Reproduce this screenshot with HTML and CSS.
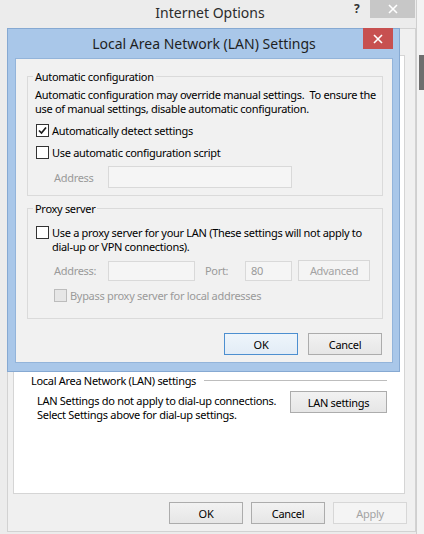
FILE: index.html
```html
<!DOCTYPE html>
<html lang="en">
<head>
    <meta charset="UTF-8">
    <meta name="viewport" content="width=device-width, initial-scale=1.0">
    <title>Internet Options</title>
    <link rel="stylesheet" href="styles.css">
</head>
<body>

    <div class="page">
        <div class="window">
            <div class="titlebar">
                <span class="title">Internet Options</span>
                <span class="help">?</span>
                <span class="close close-gray">
                    <svg width="10" height="10" viewBox="0 0 10 10"><path d="M1 1L9 9M9 1L1 9" stroke="#fff" stroke-width="1.6"/></svg>
                </span>
            </div>

            <div class="client">
                <div class="tabpanel">
                    <div class="etched">
                        <span>Local Area Network (LAN) settings</span>
                        <span class="rule"></span>
                    </div>
                    <div class="lan-row">
                        <p class="note">LAN Settings do not apply to dial-up connections.<br>Select Settings above for dial-up settings.</p>
                        <button class="btn lan-btn">LAN settings</button>
                    </div>
                </div>

                <div class="actions">
                    <button class="btn">OK</button>
                    <button class="btn">Cancel</button>
                    <button class="btn" disabled>Apply</button>
                </div>
            </div>
        </div>
        <div class="side-strip">
            <div class="side-dark"></div>
        </div>
    </div>

    <!-- LAN settings dialog, opened on top of the options window -->
    <div class="dialog">
        <div class="dlg-title">
            <span>Local Area Network (LAN) Settings</span>
            <span class="close close-red">
                <svg width="10" height="10" viewBox="0 0 10 10"><path d="M1 1L9 9M9 1L1 9" stroke="#fff" stroke-width="1.6"/></svg>
            </span>
        </div>

        <div class="dlg-client">
            <fieldset class="group auto-group">
                <legend>Automatic configuration</legend>
                <p class="text">Automatic configuration may override manual settings.&nbsp; To ensure the<br>use of manual settings, disable automatic configuration.</p>

                <label class="check-row first">
                    <span class="checkbox checked">
                        <svg width="11" height="11" viewBox="0 0 11 11"><path d="M2 5.5L4.5 8L9 2.5" fill="none" stroke="#1a1a1a" stroke-width="1.7"/></svg>
                    </span>
                    Automatically detect settings
                </label>
                <label class="check-row">
                    <span class="checkbox"></span>
                    Use automatic configuration script
                </label>

                <div class="field-row script-row">
                    <span class="field-label">Address</span>
                    <span class="input wide"></span>
                </div>
            </fieldset>

            <fieldset class="group proxy-group">
                <legend>Proxy server</legend>
                <label class="check-row top">
                    <span class="checkbox"></span>
                    <span class="text">Use a proxy server for your LAN (These settings will not apply to<br>dial-up or VPN connections).</span>
                </label>

                <div class="field-row proxy-row">
                    <span class="field-label">Address:</span>
                    <span class="input addr"></span>
                    <span class="field-label port-label">Port:</span>
                    <span class="input port">80</span>
                    <button class="btn adv-btn" disabled>Advanced</button>
                </div>

                <label class="check-row bypass">
                    <span class="checkbox disabled"></span>
                    <span class="muted">Bypass proxy server for local addresses</span>
                </label>
            </fieldset>

            <div class="dlg-actions">
                <button class="btn default">OK</button>
                <button class="btn">Cancel</button>
            </div>
        </div>
    </div>

</body>
</html>
```

FILE: styles.css
```css
* {
    box-sizing: border-box;
}
body {
    margin: 0;
    width: 424px;
    height: 534px;
    overflow: hidden;
    background-color: #efefef;
    font-family: "Noto Sans", "Open Sans", sans-serif;
    font-size: 11px;
    letter-spacing: -0.3px;
    color: #000;
    position: relative;
}
p {
    margin: 0;
}

/* ---- options window behind ---- */
.page {
    display: flex;
    height: 534px;
}
.window {
    width: 416px;
    display: flex;
    flex-direction: column;
    background-color: #ececec;
}
.titlebar {
    height: 28px;
    position: relative;
    display: flex;
    justify-content: center;
}
.title {
    font-size: 14px;
    letter-spacing: 0;
    color: #2b2b2b;
    line-height: 26px;
    margin-left: 4px;
}
.help {
    position: absolute;
    left: 354px;
    top: 0;
    font-weight: bold;
    font-size: 12px;
    color: #333;
}
.close {
    position: absolute;
    display: flex;
    align-items: center;
    justify-content: center;
}
.close-gray {
    right: 1px;
    top: 0;
    width: 45px;
    height: 18px;
    background-color: #c7c7c7;
}
.client {
    flex: 1;
    display: flex;
    flex-direction: column;
    margin: 0 0 2px 7px;
    padding: 26px 8px 7px 5px;
    border: 1px solid #d2d2d2;
    background-color: #f0f0f0;
}
.tabpanel {
    flex: 1;
    margin-right: 2px;
    padding: 317px 17px 0 17px;
    background-color: #fff;
    border: 1px solid #d5d5d5;
}
.etched {
    display: flex;
    align-items: center;
    gap: 8px;
    line-height: 15px;
    white-space: nowrap;
}
.rule {
    flex: 1;
    height: 1px;
    background-color: #bdbdbd;
}
.lan-row {
    display: flex;
    justify-content: space-between;
    align-items: flex-start;
    margin-top: 3px;
    padding-left: 6px;
}
.note {
    line-height: 14px;
    margin-top: 3px;
    white-space: nowrap;
}

.btn {
    font-family: inherit;
    font-size: 11px;
    letter-spacing: -0.3px;
    color: #000;
    height: 22px;
    width: 74px;
    padding: 0;
    border: 1px solid #acacac;
    background: linear-gradient(#f2f2f2, #e6e6e6);
}
.btn:disabled {
    color: #a3a3a3;
    border-color: #d7d7d7;
    background: #f4f4f4;
}
.btn.default {
    border-color: #4d8fd0;
    background: linear-gradient(#eef5fb, #e2ecf6);
}
.lan-btn {
    width: 97px;
}
.actions {
    display: flex;
    justify-content: flex-end;
    gap: 8px;
    margin-top: 8px;
}

.side-strip {
    flex: 1;
    border-left: 1px solid #cfcfcf;
    background-color: #f3f3f3;
    padding-top: 55px;
}
.side-dark {
    height: 35px;
    margin-left: 2px;
    background-color: #6e6e6e;
}

/* ---- LAN settings dialog ---- */
.dialog {
    position: absolute;
    left: 7px;
    top: 28px;
    width: 393px;
    height: 344px;
    padding: 0 6px 8px 7px;
    display: flex;
    flex-direction: column;
    background-color: #a9c7e9;
    border: 1px solid #86a9d2;
}
.dlg-title {
    height: 29px;
    flex-shrink: 0;
    display: flex;
    justify-content: center;
    align-items: center;
    font-size: 14px;
    letter-spacing: 0;
    color: #1f1f1f;
}
.close-red {
    right: 6px;
    top: -1px;
    width: 30px;
    height: 21px;
    background-color: #c75050;
}
.dlg-client {
    flex: 1;
    min-height: 0;
    overflow: hidden;
    padding: 0 9px 0 11px;
    background-color: #f1f1f1;
    border: 1px solid #93b4da;
}
.group {
    margin: 10px 0 0 0;
    padding: 4px 7px 7px 7px;
    border: 1px solid #dadada;
    min-width: 0;
}
.group legend {
    padding: 0 2px;
    margin-left: -2px;
    line-height: 15px;
}
.proxy-group {
    margin-top: 5px;
    padding-top: 10px;
    padding-bottom: 15px;
}
.text {
    line-height: 13.5px;
    white-space: nowrap;
}
.check-row {
    display: flex;
    align-items: center;
    gap: 3px;
    line-height: 15px;
    margin-left: 1px;
    margin-top: 7px;
}
.check-row.first {
    margin-top: 8px;
}
.check-row.top {
    align-items: flex-start;
    margin-top: 0;
}
.check-row.top .text {
    line-height: 14px;
}
.checkbox {
    width: 13px;
    height: 13px;
    flex-shrink: 0;
    border: 1px solid #333;
    background-color: #fff;
    display: flex;
    align-items: center;
    justify-content: center;
}
.checkbox.disabled {
    border-color: #bcbcbc;
    background-color: #e6e6e6;
}
.muted,
.field-label {
    color: #9a9a9a;
}
.field-row {
    display: flex;
    align-items: center;
    padding-left: 19px;
}
.field-label {
    width: 54px;
}
.script-row {
    margin-top: 6px;
}
.input {
    height: 22px;
    border: 1px solid #d9d9d9;
    background-color: #f5f5f5;
    color: #9a9a9a;
    line-height: 18px;
    padding-left: 5px;
}
.input.wide {
    width: 184px;
}
.proxy-row {
    margin-top: 6px;
}
.proxy-row .input {
    height: 20px;
}
.input.addr {
    width: 87px;
}
.port-label {
    width: 50px;
    padding-left: 10px;
}
.input.port {
    width: 47px;
}
.adv-btn {
    width: 72px;
    height: 21px;
    margin-left: 6px;
}
.check-row.bypass {
    margin-left: 19px;
    margin-top: 7px;
}
.dlg-actions {
    display: flex;
    justify-content: flex-end;
    gap: 10px;
    margin-top: 14px;
    padding-right: 1px;
}
```
